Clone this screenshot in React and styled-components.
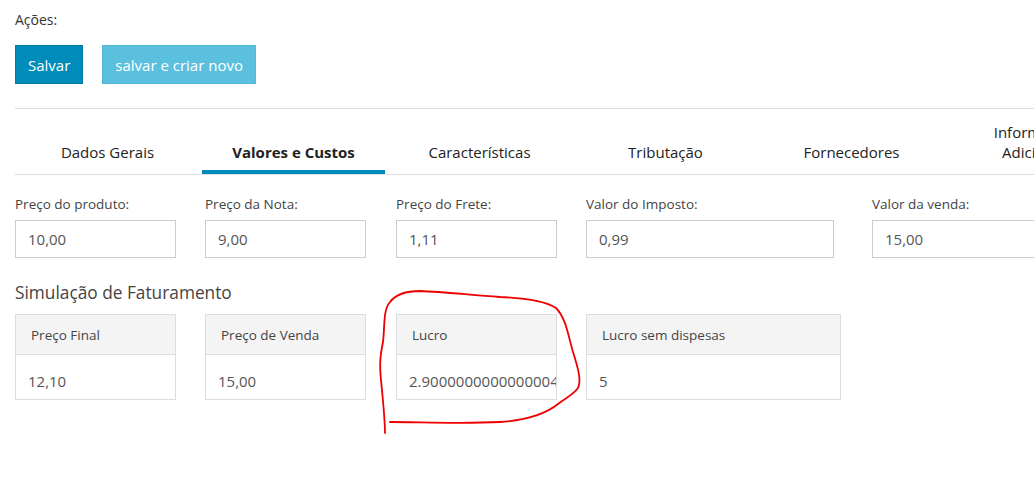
import React from 'react';
import styled, { createGlobalStyle } from 'styled-components';

const GlobalStyle = createGlobalStyle`
  body {
    margin: 0;
    background: #fff;
    overflow: hidden;
    font-family: "Open Sans", "Noto Sans", sans-serif;
    color: #222;
  }
`;

const Page = styled.div`
  position: relative;
  width: 1200px;
  min-height: 485px;
  padding: 0 0 0 15px;
`;

const Actions = styled.div`
  padding-top: 10px;
  padding-bottom: 24px;
  border-bottom: 1px solid #ddd;
  .title {
    font-size: 14px;
    line-height: 20px;
    color: #333;
    margin-bottom: 15px;
  }
`;

const ButtonRow = styled.div`
  display: flex;
  gap: 19px;
`;

const Button = styled.button`
  height: 39px;
  padding: 0 12px;
  font-family: inherit;
  font-size: 15px;
  color: #fff;
  background: ${props => (props.$light ? '#5bc0de' : '#008cba')};
  border: 1px solid ${props => (props.$light ? '#52b6d4' : '#007ba6')};
  border-radius: 0;
`;

const Tabs = styled.div`
  display: flex;
  align-items: flex-end;
  gap: 3px;
  padding-left: 1px;
  height: 65px;
  border-bottom: 1px solid #ddd;
`;

const Tab = styled.div`
  flex: 0 0 183px;
  box-sizing: border-box;
  padding: 0 16px 8px;
  text-align: center;
  font-size: 15px;
  line-height: 20px;
  color: #222;
  font-weight: ${props => (props.$active ? 700 : 400)};
  border-bottom: 4px solid ${props => (props.$active ? '#008cba' : 'transparent')};
`;

const Grid = styled.div`
  display: grid;
  grid-template-columns: 190px 191px 190px 286px 1fr;
`;

const Fields = styled(Grid)`
  padding-top: 19px;
`;

const Field = styled.div`
  width: ${props => props.$w}px;
  label {
    display: block;
    font-size: 13.5px;
    line-height: 20px;
    color: #444;
    margin-bottom: 6px;
  }
`;

const Input = styled.div`
  box-sizing: border-box;
  height: 38px;
  border: 1px solid #ccc;
  padding: 0 12px;
  font-size: 15px;
  line-height: 36px;
  color: #555;
`;

const SectionTitle = styled.h3`
  margin: 22px 0 9px;
  font-size: 17.3px;
  font-weight: 400;
  line-height: 25px;
  color: #444;
`;

const Card = styled.div`
  width: ${props => props.$w}px;
  box-sizing: border-box;
  border: 1px solid #ddd;
`;

const CardHead = styled.div`
  height: 39px;
  padding: 0 15px;
  background: #f4f4f4;
  border-bottom: 1px solid #ddd;
  font-size: 13.5px;
  line-height: 41px;
  color: #444;
`;

const CardBody = styled.div`
  height: 44px;
  padding: 0 12px;
  font-size: 15px;
  line-height: 52px;
  color: #555;
  white-space: nowrap;
  overflow: hidden;
`;

const Scribble = styled.svg`
  position: absolute;
  left: 0;
  top: 0;
  width: 600px;
  height: 450px;
  pointer-events: none;
`;

const fields = [
  { label: 'Preço do produto:', value: '10,00', w: 161 },
  { label: 'Preço da Nota:', value: '9,00', w: 161 },
  { label: 'Preço do Frete:', value: '1,11', w: 161 },
  { label: 'Valor do Imposto:', value: '0,99', w: 248 },
  { label: 'Valor da venda:', value: '15,00', w: 200 },
];

const cards = [
  { label: 'Preço Final', value: '12,10', w: 161 },
  { label: 'Preço de Venda', value: '15,00', w: 161 },
  { label: 'Lucro', value: '2.9000000000000004', w: 161 },
  { label: 'Lucro sem dispesas', value: '5', w: 255 },
];

const tabs = [
  'Dados Gerais',
  'Valores e Custos',
  'Características',
  'Tributação',
  'Fornecedores',
  'Informações Adicionais',
];

const App = () => (
  <Page>
    <GlobalStyle />
    <Actions>
      <div className="title">Ações:</div>
      <ButtonRow>
        <Button>Salvar</Button>
        <Button $light>salvar e criar novo</Button>
      </ButtonRow>
    </Actions>
    <Tabs>
      {tabs.map(t => (
        <Tab key={t} $active={t === 'Valores e Custos'}>
          {t}
        </Tab>
      ))}
    </Tabs>
    <Fields>
      {fields.map(f => (
        <Field key={f.label} $w={f.w}>
          <label>{f.label}</label>
          <Input>{f.value}</Input>
        </Field>
      ))}
    </Fields>
    <SectionTitle>Simulação de Faturamento</SectionTitle>
    <Grid>
      {cards.map(c => (
        <Card key={c.label} $w={c.w}>
          <CardHead>{c.label}</CardHead>
          <CardBody>{c.value}</CardBody>
        </Card>
      ))}
    </Grid>
    <Scribble viewBox="0 0 600 450">
      <path
        d="M385,433 C385,420 383,400 381,380 C379,362 381,352 383,342 C385,325 383,310 390,302 C396,294 405,291 420,291 C445,292 470,295 500,297 C525,298 545,301 556,308 C566,318 568,335 573,352 C577,365 582,380 578,388 C572,396 565,398 558,404 C548,412 530,420 500,422 C460,424 420,422 390,422"
        fill="none"
        stroke="#ee0000"
        strokeWidth="1.8"
        strokeLinecap="round"
      />
    </Scribble>
  </Page>
);

export default App;
